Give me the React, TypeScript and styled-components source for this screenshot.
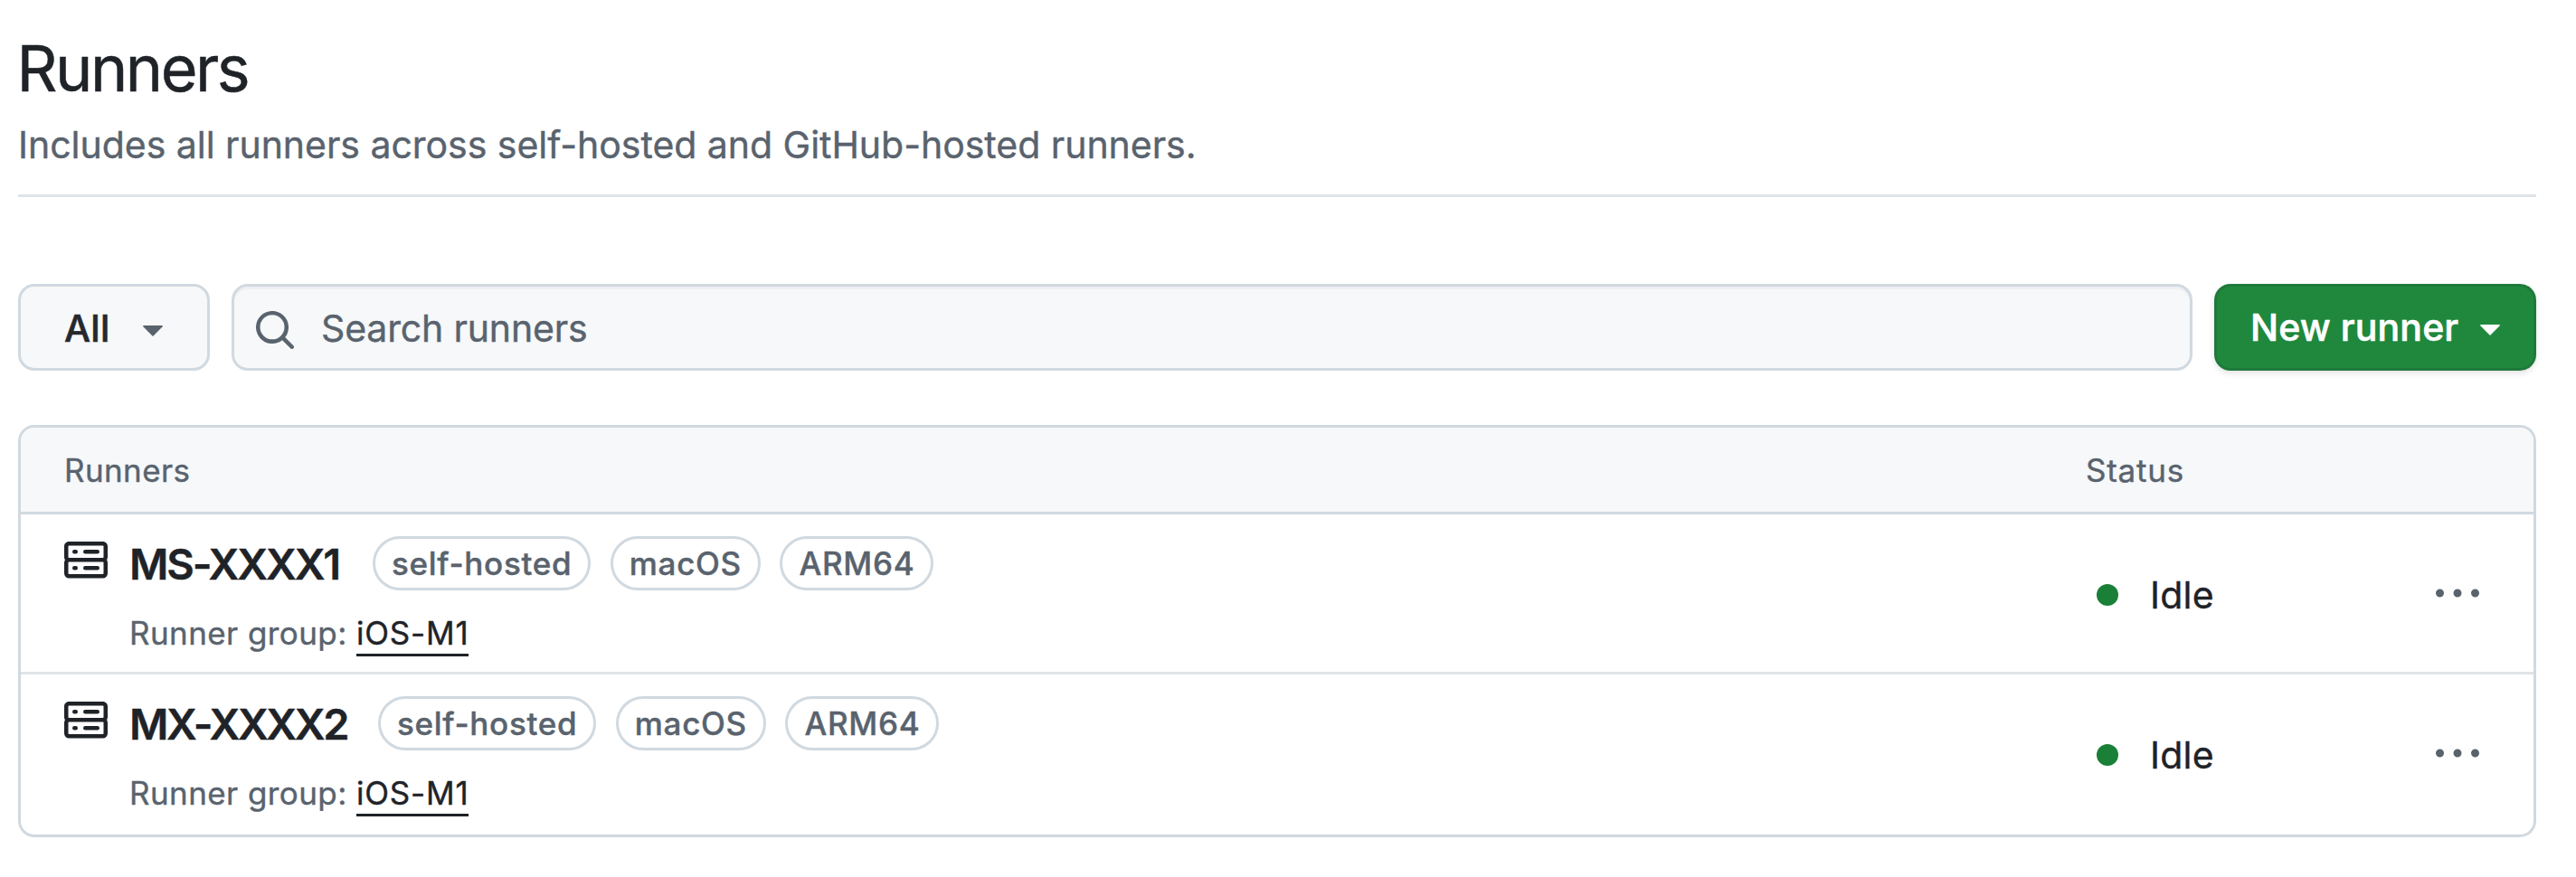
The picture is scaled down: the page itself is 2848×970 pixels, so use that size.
import React from 'react';
import styled, { createGlobalStyle } from 'styled-components';

const color = {
  fg: '#1f2328',
  muted: '#59636e',
  border: '#d1d9e0',
  divider: '#dfe4e8',
  subtle: '#f6f8fa',
  green: '#1f883d',
  idle: '#1a7f37',
};

const GlobalStyle = createGlobalStyle`
  * { box-sizing: border-box; }
  body {
    margin: 0;
    background: #fff;
    color: ${color.fg};
    font-family: Inter, 'Liberation Sans', sans-serif;
    -webkit-font-smoothing: antialiased;
    -webkit-text-stroke: 0.4px currentColor;
  }
  button, input { font-family: inherit; }
`;

const Page = styled.main`
  padding: 22px 44px 44px 20px;
`;

const PageHeader = styled.header`
  padding-bottom: 23px;
  border-bottom: 3px solid ${color.divider};
`;

const Title = styled.h1`
  margin: 0 0 0 -1.5px;
  font-size: 70px;
  line-height: 107px;
  font-weight: 400;
  letter-spacing: -2.5px;
  -webkit-text-stroke-width: 0.5px;
`;

const Subtitle = styled.p`
  margin: 0;
  font-size: 41px;
  line-height: 63px;
  letter-spacing: -0.03px;
  color: ${color.muted};
`;

const Toolbar = styled.div`
  display: flex;
  gap: 24px;
  height: 96px;
  margin-top: 96px;
`;

const ToolbarButton = styled.button`
  display: flex;
  align-items: center;
  flex: none;
  margin: 0;
  border-radius: 18px;
  font-size: 41px;
  line-height: 50px;
  font-weight: 500;
  -webkit-text-stroke: 0.6px currentColor;
`;

const FilterButton = styled(ToolbarButton)`
  justify-content: space-between;
  width: 212px;
  padding: 2px 36px 0 48px;
  border: 3px solid ${color.border};
  background: ${color.subtle};
  color: #25292e;
  letter-spacing: 0.3px;

  svg { color: ${color.muted}; }
`;

const NewRunnerButton = styled(ToolbarButton)`
  justify-content: space-between;
  width: 356px;
  padding: 0 24px 0 37px;
  border: 3px solid #1f793b;
  background: ${color.green};
  color: #fff;
  letter-spacing: 0.12px;
  box-shadow: 0 3px 6px rgba(31, 35, 40, 0.12);
`;

const SearchBox = styled.label`
  display: flex;
  align-items: center;
  flex: 1;
  gap: 27px;
  padding: 2px 21px 0;
  border: 3px solid ${color.border};
  border-radius: 18px;
  background: ${color.subtle};
  box-shadow: inset 0 3px 0 rgba(31, 35, 40, 0.04);
  color: ${color.muted};

  svg { margin-top: 4px; }
`;

const SearchInput = styled.input`
  flex: 1;
  height: 50px;
  padding: 0;
  border: 0;
  outline: 0;
  background: transparent;
  color: ${color.muted};
  font-size: 41px;
  line-height: 50px;
  letter-spacing: -0.16px;

  &::placeholder {
    color: ${color.muted};
    opacity: 1;
  }
`;

const Table = styled.section`
  margin-top: 60px;
  border: 3px solid ${color.border};
  border-radius: 18px;
  overflow: hidden;
`;

const Columns = styled.div`
  display: grid;
  grid-template-columns: 1fr 496px;
  padding-left: 48px;
`;

const TableHead = styled(Columns)`
  align-items: center;
  height: 96px;
  border-bottom: 3px solid ${color.border};
  background: ${color.subtle};
  color: ${color.muted};
  font-size: 35px;
  line-height: 42px;
  letter-spacing: 0.4px;
`;

const StatusHead = styled.span`
  padding-left: 1px;
  letter-spacing: 0.75px;
`;

const Row = styled(Columns)`
  height: 177px;
  border-bottom: 3px solid ${color.divider};

  &:last-child { border-bottom-color: transparent; }
`;

const RunnerCell = styled.div`
  display: flex;
  gap: 24px;
  padding-top: 24px;

  > svg { margin-top: 3px; }
`;

const NameLine = styled.div`
  display: flex;
  align-items: center;
  height: 60px;
`;

const Name = styled.span<{ $width: number; $tracking: number }>`
  width: ${(p) => p.$width}px;
  font-size: 47px;
  line-height: 57px;
  font-weight: 600;
  letter-spacing: ${(p) => p.$tracking}px;
`;

const Labels = styled.div`
  display: flex;
  gap: 21.5px;
`;

const Label = styled.span`
  height: 60px;
  padding: 6px 18px;
  border: 3px solid ${color.border};
  border-radius: 30px;
  color: ${color.muted};
  font-size: 35px;
  line-height: 42px;
  font-weight: 500;
  letter-spacing: 0.7px;
  white-space: nowrap;
`;

const GroupLine = styled.div`
  margin-top: 20px;
  color: ${color.muted};
  font-size: 35px;
  line-height: 54px;
  letter-spacing: 0.42px;
`;

const GroupLink = styled.a`
  padding-bottom: 2px;
  border-bottom: 3px solid ${color.fg};
  color: ${color.fg};
  letter-spacing: 0.8px;
`;

const StatusCell = styled.div`
  display: flex;
  align-items: center;
  padding: 0 60px 0 13px;
`;

const Dot = styled.i`
  width: 24px;
  height: 24px;
  margin: 4px 35px 0 0;
  border-radius: 50%;
  background: ${color.idle};
`;

const StatusText = styled.span`
  flex: 1;
  padding-top: 4px;
  font-size: 41px;
  line-height: 50px;
  letter-spacing: 0.2px;
`;

const MenuButton = styled.button`
  display: flex;
  padding: 0;
  border: 0;
  background: none;
  color: ${color.muted};
`;

const Icon = styled.svg.attrs({ viewBox: '0 0 16 16', 'aria-hidden': true })`
  flex: none;
  width: 48px;
  height: 48px;
  fill: currentColor;
`;

const Caret = () => (
  <Icon>
    <path d="m4.427 7.427 3.396 3.396a.25.25 0 0 0 .354 0l3.396-3.396A.25.25 0 0 0 11.396 7H4.604a.25.25 0 0 0-.177.427Z" />
  </Icon>
);

const SearchIcon = () => (
  <Icon>
    <path d="M10.68 11.74a6 6 0 0 1-7.922-8.982 6 6 0 0 1 8.982 7.922l3.04 3.04a.749.749 0 0 1-.326 1.275.749.749 0 0 1-.734-.215ZM11.5 7a4.499 4.499 0 1 0-8.997 0A4.499 4.499 0 0 0 11.5 7Z" />
  </Icon>
);

const ServerIcon = () => (
  <Icon>
    <path d="M1.75 1h12.5c.966 0 1.75.784 1.75 1.75v4c0 .372-.116.717-.314 1 .198.283.314.628.314 1v4a1.75 1.75 0 0 1-1.75 1.75H1.75A1.75 1.75 0 0 1 0 12.75v-4c0-.358.109-.707.314-1a1.739 1.739 0 0 1-.314-1v-4C0 1.784.784 1 1.75 1ZM1.5 2.75v4c0 .138.112.25.25.25h12.5a.25.25 0 0 0 .25-.25v-4a.25.25 0 0 0-.25-.25H1.75a.25.25 0 0 0-.25.25Zm.25 5.75a.25.25 0 0 0-.25.25v4c0 .138.112.25.25.25h12.5a.25.25 0 0 0 .25-.25v-4a.25.25 0 0 0-.25-.25ZM7 4.75A.75.75 0 0 1 7.75 4h4.5a.75.75 0 0 1 0 1.5h-4.5A.75.75 0 0 1 7 4.75ZM7.75 10h4.5a.75.75 0 0 1 0 1.5h-4.5a.75.75 0 0 1 0-1.5ZM3 4.75A.75.75 0 0 1 3.75 4h.5a.75.75 0 0 1 0 1.5h-.5A.75.75 0 0 1 3 4.75ZM3.75 10h.5a.75.75 0 0 1 0 1.5h-.5a.75.75 0 0 1 0-1.5Z" />
  </Icon>
);

const KebabIcon = () => (
  <Icon>
    <path d="M8 9.5a1.5 1.5 0 1 0 0-3 1.5 1.5 0 0 0 0 3ZM1.5 9.5a1.5 1.5 0 1 0 0-3 1.5 1.5 0 0 0 0 3Zm13 0a1.5 1.5 0 1 0 0-3 1.5 1.5 0 0 0 0 3Z" />
  </Icon>
);

const runners = [
  { name: 'MS-XXXX1', tracking: -2.14, width: 269, group: 'iOS-M1', labels: ['self-hosted', 'macOS', 'ARM64'] },
  { name: 'MX-XXXX2', tracking: -2.35, width: 275, group: 'iOS-M1', labels: ['self-hosted', 'macOS', 'ARM64'] },
];

export default function App() {
  return (
    <>
      <GlobalStyle />
      <Page>
        <PageHeader>
          <Title>Runners</Title>
          <Subtitle>Includes all runners across self-hosted and GitHub-hosted runners.</Subtitle>
        </PageHeader>
        <Toolbar>
          <FilterButton>
            All
            <Caret />
          </FilterButton>
          <SearchBox>
            <SearchIcon />
            <SearchInput placeholder="Search runners" />
          </SearchBox>
          <NewRunnerButton>
            New runner
            <Caret />
          </NewRunnerButton>
        </Toolbar>
        <Table>
          <TableHead>
            <span>Runners</span>
            <StatusHead>Status</StatusHead>
          </TableHead>
          {runners.map((r) => (
            <Row key={r.name}>
              <RunnerCell>
                <ServerIcon />
                <div>
                  <NameLine>
                    <Name $width={r.width} $tracking={r.tracking}>{r.name}</Name>
                    <Labels>
                      {r.labels.map((l) => (
                        <Label key={l}>{l}</Label>
                      ))}
                    </Labels>
                  </NameLine>
                  <GroupLine>
                    Runner group: <GroupLink>{r.group}</GroupLink>
                  </GroupLine>
                </div>
              </RunnerCell>
              <StatusCell>
                <Dot />
                <StatusText>Idle</StatusText>
                <MenuButton aria-label="Runner menu">
                  <KebabIcon />
                </MenuButton>
              </StatusCell>
            </Row>
          ))}
        </Table>
      </Page>
    </>
  );
}
